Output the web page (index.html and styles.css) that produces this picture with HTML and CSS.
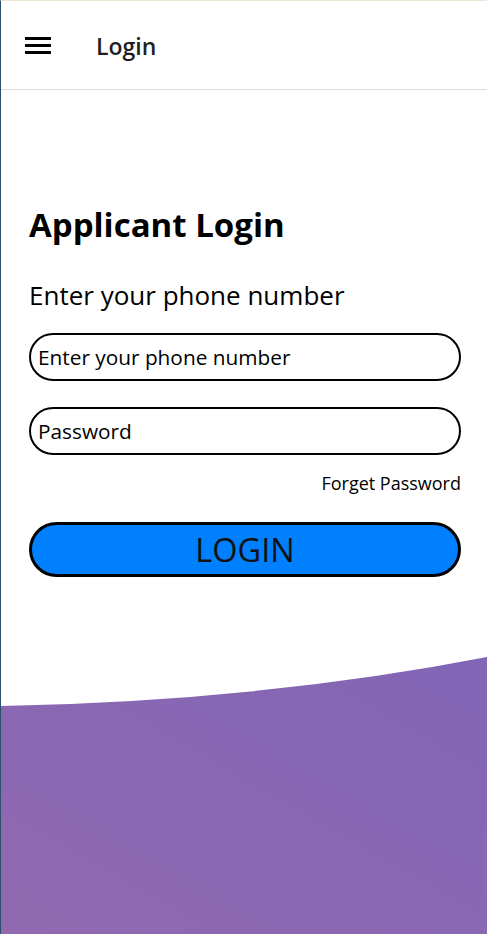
FILE: index.html
```html
<!DOCTYPE html>
<html>
<head>
<meta charset="utf-8">
<link rel="stylesheet" href="styles.css">
</head>
<body>
<div class="page">
  <header class="topbar">
    <svg class="menu" width="26" height="18" viewBox="0 0 26 18">
      <rect x="0" y="0" width="26" height="3" fill="#000"/>
      <rect x="0" y="7" width="26" height="3" fill="#000"/>
      <rect x="0" y="14" width="26" height="3" fill="#000"/>
    </svg>
    <span class="title">Login</span>
  </header>
  <main class="content">
    <h1 class="heading">Applicant Login</h1>
    <p class="sub">Enter your phone number</p>
    <div class="field">Enter your phone number</div>
    <div class="field">Password</div>
    <div class="forget">Forget Password</div>
    <div class="btn">LOGIN</div>
  </main>
  <svg class="wave" width="486" height="280" viewBox="0 0 486 280" preserveAspectRatio="none">
    <defs>
      <linearGradient id="g" x1="0" y1="1" x2="1" y2="0">
        <stop offset="0" stop-color="#9169b0"/>
        <stop offset="1" stop-color="#8265b6"/>
      </linearGradient>
    </defs>
    <path d="M0 52 Q 260 47 486 3 L486 280 L0 280 Z" fill="url(#g)"/>
  </svg>
</div>
</body>
</html>
```
FILE: styles.css
```css
* { box-sizing: border-box; }
html, body { margin: 0; padding: 0; }
body { font-family: "Open Sans", "Noto Sans", sans-serif; color: #000; background: #fff; }
.page {
  position: relative;
  width: 487px;
  height: 934px;
  overflow: hidden;
  border-left: 1px solid #2d4f6e;
  border-top: 1px solid #ebe3d3;
}
.topbar {
  height: 89px;
  border-bottom: 1px solid #dcdcdc;
  display: flex;
  align-items: center;
  padding-left: 24px;
}
.menu { display: block; margin-right: 45px; margin-top: 2px; }
.title { font-size: 23px; font-weight: 600; color: #1f1f1f; margin-top: 2px; }
.content { padding: 112px 26px 0 28px; display: flex; flex-direction: column; }
.heading { font-size: 33px; font-weight: 700; margin: 0; line-height: 46px; }
.sub { font-size: 26px; margin: 30px 0 21px; line-height: 34px; }
.field {
  height: 48px;
  border: 2px solid #000;
  border-radius: 24px;
  font-size: 20.8px;
  display: flex;
  align-items: center;
  padding-left: 7px;
  margin-bottom: 26px;
}
.forget { align-self: flex-end; font-size: 18px; margin-top: -10px; line-height: 24px; }
.btn {
  margin-top: 27px;
  height: 55px;
  border: 3px solid #000;
  border-radius: 28px;
  background: #007fff;
  color: #111;
  font-size: 32.5px;
  display: flex;
  align-items: center;
  justify-content: center;
}
.wave { position: absolute; left: 0; bottom: 0; display: block; }
```
